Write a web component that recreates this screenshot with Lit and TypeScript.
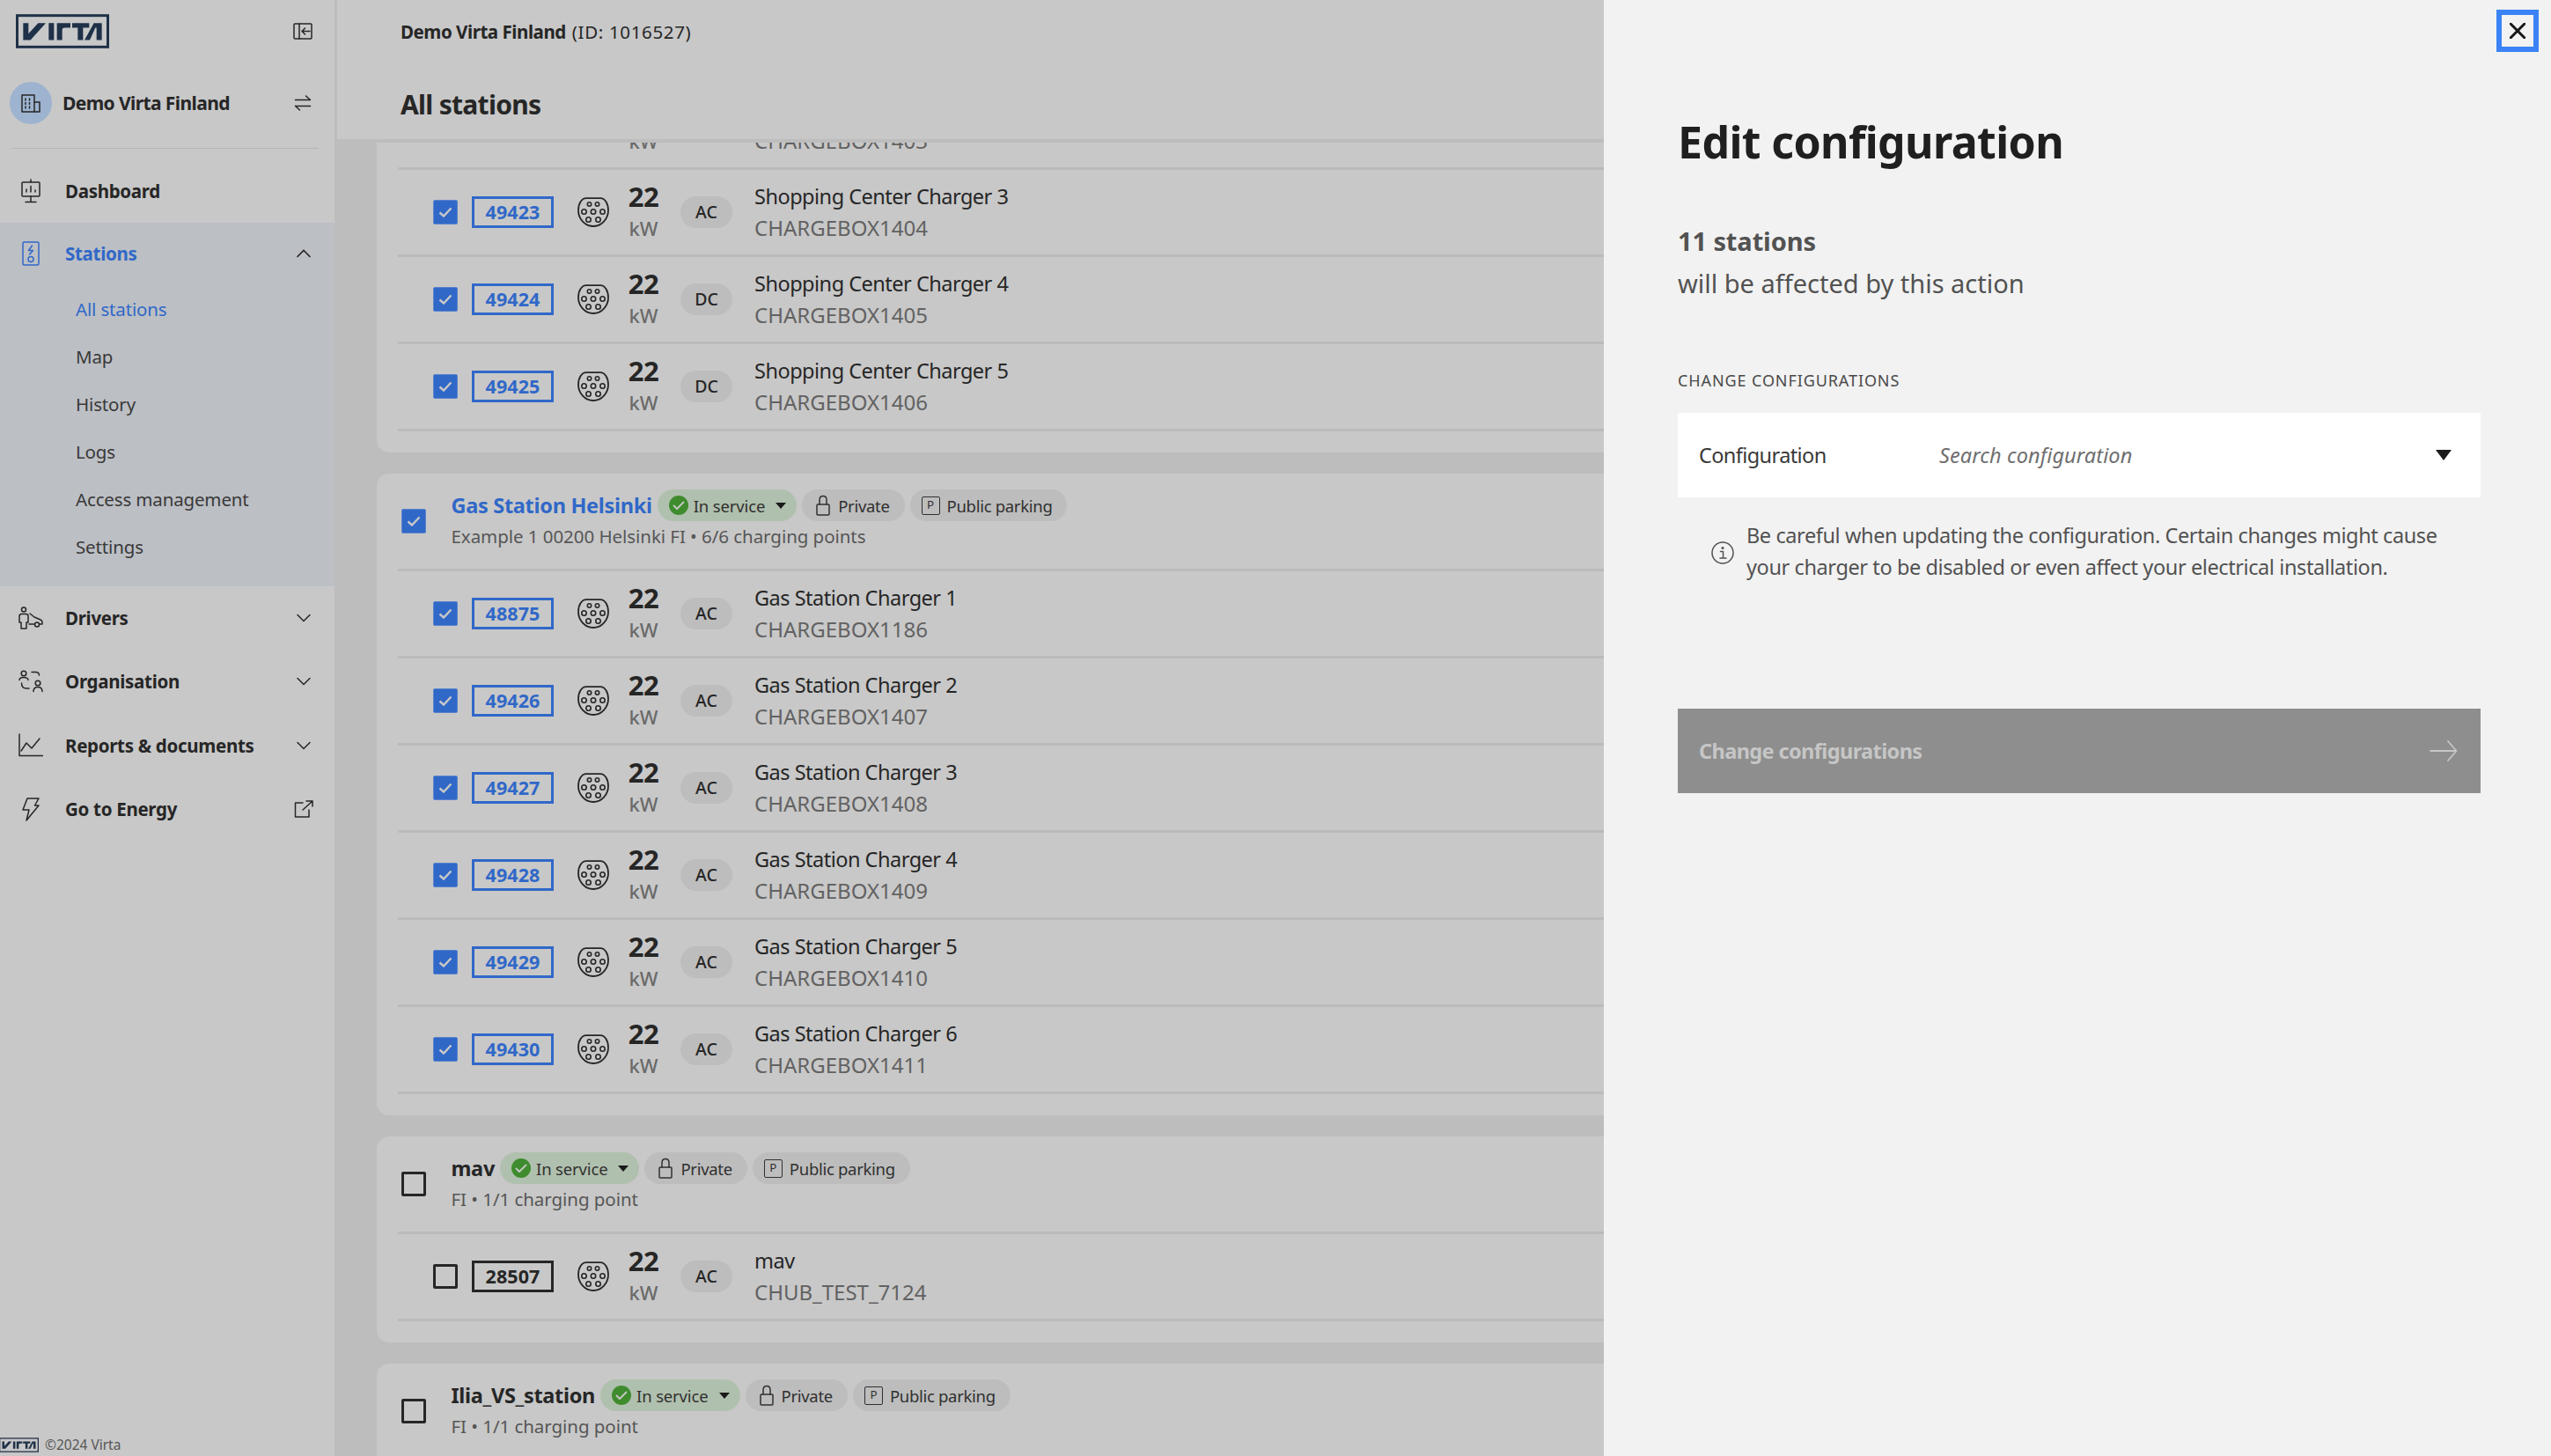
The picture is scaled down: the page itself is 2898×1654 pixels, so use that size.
import { LitElement, html, css, svg } from "lit";
import { customElement } from "lit/decorators.js";

const Logo = (w: number, h: number) => html`<svg class="logo" width=${w} height=${h} viewBox="0 0 318 116">
  <rect x="4.5" y="4.5" width="309" height="107" fill="none" stroke="#1f3148" stroke-width="9"/>
  <g fill="#1f3148">
    <path d="M25 30H43V66L76 30H102L50 88H25Z"/>
    <path d="M112 30H130V88H112Z"/>
    <path d="M140 30H186V46H166Q158 46 158 54V88H140Z"/>
    <path d="M192 30H250V46H229V88H211V46H192Z"/>
    <path d="M234 88L266 30H293V88H275V46H271L252 88Z"/>
  </g></svg>`;

const ic = (w: number, h: number, vb: string, body: unknown, cls = "") =>
  html`<svg class="ic ${cls}" width=${w} height=${h} viewBox=${vb} fill="none" stroke="currentColor" stroke-width="1.5" stroke-linecap="round" stroke-linejoin="round">${body}</svg>`;

const chevD = ic(18, 10, "0 0 18 10", svg`<path d="M2 1.5L9 8.5L16 1.5" stroke-linejoin="miter"/>`);
const chevU = ic(18, 10, "0 0 18 10", svg`<path d="M2 8.5L9 1.5L16 8.5" stroke-width="1.7" stroke-linejoin="miter"/>`);
const collapse = ic(22, 19, "0 0 22 19", svg`<rect x="1" y="1" width="20" height="17" rx="1"/><path d="M7 1V18"/><path d="M19 9.5H10M13.5 6L10 9.5L13.5 13"/>`);
const swap = ic(20, 20, "0 0 20 20", svg`<path d="M1.5 6.5H18.5M13.5 2L18.5 6.5"/><path d="M18.5 13.5H1.5M6.5 18L1.5 13.5"/>`);
const building = ic(22, 21, "0 0 22 21", svg`<rect x="1" y="1" width="14" height="19"/><path d="M15 9H21V20H15"/><path d="M5 5V7M9.5 5V7M5 9.5V11.5M9.5 9.5V11.5M5 14V16M9.5 14V16"/>`);
const dash = ic(22, 28, "0 0 22 28", svg`<rect x="1" y="4" width="20" height="16" rx="1"/><path d="M11 1V4M11 20V26M5 26.5H17M6 15V12M11 15V8.5M16 15V13"/>`);
const stationIc = ic(20, 28, "0 0 20 28", svg`<rect x="1" y="1" width="18" height="26" rx="1.5"/><path d="M11.5 5L7.5 10.5H12.5L8.5 15"/><circle cx="10" cy="20.5" r="3"/>`);
const driver = ic(28, 26, "0 0 28 26", svg`<circle cx="6" cy="3.5" r="2.5"/><path d="M1 18V11Q1 8.5 3.5 8.5H8.5Q11 8.5 11 11V18H9V25H3V18Z"/><path d="M13 8L18 12L25 15Q27 16 27 18V20H24M18 20H12"/><circle cx="21" cy="20.5" r="2.5"/>`);
const org = ic(28, 26, "0 0 28 26", svg`<circle cx="6" cy="4" r="2.8"/><path d="M1 11.5Q1 8.5 6 8.5Q10.5 8.5 11 11.5"/><circle cx="22" cy="15" r="2.8"/><path d="M17 24.5Q17 19.5 22 19.5Q27 19.5 27 24.5"/><path d="M15 2.5H20Q23 2.5 23.5 6"/><path d="M3.5 15Q3.5 21 9 21H12"/>`);
const chart = ic(28, 27, "0 0 28 27", svg`<path d="M1 1V25.5H27.5"/><path d="M3 20L9 11L15 17L24 6"/>`);
const bolt = ic(20, 27, "0 0 20 27", svg`<path d="M6 1H19L14.5 9H19L5 26L8 14H1Z"/>`);
const ext = ic(22, 20, "0 0 22 20", svg`<path d="M10 3H1.5V19H17V11"/><path d="M10 11L21 1M14 1H21V7"/>`, "ext");
const connector = ic(36, 34, "0 0 36 34", svg`<path d="M10 1.2H26C31 1.2 35 7 35 15C35 24 28 33 18 33C8 33 1 24 1 15C1 7 5 1.2 10 1.2Z" stroke-width="1.8"/>
  <g stroke-width="1.6"><circle cx="13.5" cy="8" r="2.2"/><circle cx="22.5" cy="8" r="2.2"/><circle cx="7.5" cy="16.5" r="2.7"/><circle cx="18" cy="16.5" r="2.7"/><circle cx="28.5" cy="16.5" r="2.7"/><circle cx="12.5" cy="25.5" r="2.7"/><circle cx="23.5" cy="25.5" r="2.7"/></g>`);
const lock = ic(18, 24, "0 0 18 24", svg`<rect x="2" y="11" width="14" height="12" rx="1"/><path d="M5 11V6Q5 1.5 9 1.5Q13 1.5 13 6V11"/>`);
const parking = html`<span class="pbox">P</span>`;
const caret = html`<span class="caret"></span>`;
const checkW = ic(16, 12, "0 0 16 12", svg`<path d="M1.5 6.5L6 10.5L14.5 1.5" stroke-width="2.4" stroke-linejoin="miter" stroke-linecap="butt"/>`, "ck");
const okW = ic(14, 11, "0 0 14 11", svg`<path d="M1.5 5.5L5 9L12.5 1.5" stroke-width="1.8"/>`);
const info = ic(26, 26, "0 0 26 26", svg`<circle cx="13" cy="13" r="12"/><path d="M10.5 11.5H13.5V19M10 19H17" /><circle cx="13" cy="7.5" r=".8" fill="currentColor"/>`);
const arrow = ic(32, 24, "0 0 32 24", svg`<path d="M1 12H30M21 1L30.5 12L21 23" stroke-width="1.8"/>`);
const closeX = ic(18, 18, "0 0 18 18", svg`<path d="M1 1L17 17M17 1L1 17" stroke-width="3" stroke-linecap="square"/>`);

type Row = { id: string; type: string; name: string; code: string; on: boolean };
type Card = { title?: string; sub?: string; on?: boolean; rows: Row[] };

const shop = (n: number, id: number, box: number, type: string): Row => ({ id: String(id), type, name: `Shopping Center Charger ${n}`, code: `CHARGEBOX${box}`, on: true });
const gas = (n: number, id: number, box: number): Row => ({ id: String(id), type: "AC", name: `Gas Station Charger ${n}`, code: `CHARGEBOX${box}`, on: true });

const cards: Card[] = [
  { rows: [shop(2, 49422, 1403, "AC"), shop(3, 49423, 1404, "AC"), shop(4, 49424, 1405, "DC"), shop(5, 49425, 1406, "DC")] },
  { title: "Gas Station Helsinki", sub: "Example 1 00200 Helsinki FI • 6/6 charging points", on: true,
    rows: [gas(1, 48875, 1186), gas(2, 49426, 1407), gas(3, 49427, 1408), gas(4, 49428, 1409), gas(5, 49429, 1410), gas(6, 49430, 1411)] },
  { title: "mav", sub: "FI • 1/1 charging point", rows: [{ id: "28507", type: "AC", name: "mav", code: "CHUB_TEST_7124", on: false }] },
  { title: "Ilia_VS_station", sub: "FI • 1/1 charging point", rows: [] },
];

@customElement("app-root")
export class AppRoot extends LitElement {
  static styles = css`
    :host { display: block; font-family: "Noto Sans", "Liberation Sans", sans-serif; color: #262626; }
    * { box-sizing: border-box; }
    svg { display: block; flex: none; }
    .app { position: relative; display: grid; grid-template-columns: 380px 1fr; height: 1654px; width: 2898px; overflow: hidden; background: #bdbdbd; }

    .side { display: flex; flex-direction: column; background: #c8c8c8; height: 1654px; }
    .brand { height: 72px; display: flex; align-items: center; justify-content: space-between; padding: 0 25px 1px 18px; }
    .org { height: 90px; display: flex; align-items: center; padding: 0 26px 0 11px; font-size: 21px; font-weight: 700; gap: 12px; }
    .avatar { width: 48px; height: 48px; border-radius: 50%; background: #9db3cf; display: flex; align-items: center; justify-content: center; flex: none; }
    .org .grow { flex: 1; letter-spacing: -.6px; }
    .sep { height: 1px; background: #b4b4b4; margin: 6px 18px 12px 14px; }
    .nav { height: 72.4px; display: flex; align-items: center; font-size: 20.5px; font-weight: 700; padding: 0 26px 1px 0; }
    .nav .slot { width: 74px; display: flex; justify-content: center; padding-right: 4px; flex: none; }
    .nav .lab { flex: 1; letter-spacing: -.3px; }
    .nav .ext { margin-right: -2px; }
    .group { background: #bcbfc4; padding-bottom: 18px; }
    .group .nav { height: 71px; color: #3068c8; }
    .group .chev { color: #262626; }
    .sub { height: 54px; display: flex; align-items: center; padding-left: 86px; font-size: 20.5px; color: #393939; letter-spacing: -.15px; }
    .sub.cur { color: #3068c8; }
    .foot { margin-top: auto; display: flex; align-items: center; gap: 7px; height: 18px; margin-bottom: 4px; font-size: 15.5px; color: #565656; }
    .foot .logo { margin-left: -1px; }

    .main { display: flex; flex-direction: column; border-left: 3px solid #bdbdbd; min-width: 0; }
    .top { height: 158px; background: #c8c8c8; flex: none; padding: 0 0 0 72px; margin-bottom: 4px; }
    .crumb { height: 72px; display: flex; align-items: center; font-size: 20.5px; gap: 7px; letter-spacing: -.15px; }
    .crumb b { font-weight: 700; letter-spacing: -.45px; }
    .crumb span { letter-spacing: .65px; }
    .top h2 { margin: 0; font-size: 30px; font-weight: 700; line-height: 94px; letter-spacing: -.7px; }
    .list { flex: 1; overflow: hidden; padding: 0 40px 0 45px; }
    .card { background: #c8c8c8; border-radius: 14px; padding: 0 24px 24px; margin-bottom: 24px; }
    .card.first { margin-top: -68px; }
    .head { height: 111px; border-bottom: 3px solid #bbbbbb; display: flex; align-items: center; padding-left: 3.5px; gap: 29px; }
    .head > div { margin-bottom: 3px; }
    .titleline { display: flex; align-items: center; gap: 6px; height: 36px; margin-bottom: 1px; }
    .t { font-size: 23.5px; font-weight: 700; letter-spacing: -.3px; }
    .t.on { color: #3068c8; }
    .subline { font-size: 20.5px; color: #565656; line-height: 32px; letter-spacing: -.05px; }
    .pill { height: 36px; border-radius: 18px; background: #bdbdbd; display: flex; align-items: center; font-size: 18.5px; padding: 0 17px 0 15px; gap: 8px; color: #303030; letter-spacing: -.3px; white-space: nowrap; }
    .pill.ok { background: #b0c0ae; padding: 0 12px 0 13px; gap: 6px; letter-spacing: -.15px; }
    .pill.pub { padding: 0 17px 0 13px; }
    .dot { width: 22px; height: 22px; border-radius: 50%; background: #3f8c2e; color: #c8c8c8; display: flex; align-items: center; justify-content: center; }
    .caret { width: 0; height: 0; border-left: 6px solid transparent; border-right: 6px solid transparent; border-top: 7.5px solid #1a1a1a; margin-left: 6px; }
    .pbox { width: 21px; height: 21px; border: 1.5px solid #303030; border-radius: 2px; font-size: 13px; display: flex; align-items: center; justify-content: center; font-family: "Liberation Mono", monospace; }

    .check { width: 28px; height: 28px; border-radius: 2px; background: transparent; border: 3px solid #262626; flex: none; display: flex; align-items: center; justify-content: center; color: #c8c8c8; }
    .check.on { background: #3068c8; border: 1px solid #5a84cc; }

    .row { height: 99px; border-bottom: 3px solid #bbbbbb; display: flex; align-items: center; padding-left: 39.5px; }
    .id { margin-left: 16.5px; width: 93px; height: 36px; border: 3px solid #262626; display: flex; align-items: center; justify-content: center; font-weight: 700; font-size: 21.5px; letter-spacing: .1px; padding-bottom: 2px; }
    .id.on { border-color: #3068c8; color: #3068c8; }
    .conn { margin-left: 27px; color: #262626; }
    .power { margin-left: 21px; width: 36px; display: flex; flex-direction: column; align-items: center; }
    .power b { font-size: 31px; line-height: 36px; font-weight: 700; letter-spacing: -.6px; }
    .power span { font-size: 22px; line-height: 36px; color: #6a6a6a; font-weight: 500; }
    .type { margin-left: 24px; height: 36px; min-width: 59px; padding: 0 14px 1px; border-radius: 18px; background: #bdbdbd; display: flex; align-items: center; justify-content: center; font-size: 19.5px; font-weight: 500; color: #262626; }
    .names { margin-left: 25px; font-size: 24px; line-height: 36px; }
    .names .n { font-size: 23.5px; letter-spacing: -.5px; }
    .names .c { color: #626262; }

    .panel { position: absolute; top: 0; right: 0; bottom: 0; width: 1076px; background: #f2f2f2; padding: 129px 80px 0 84px; }
    .x { position: absolute; top: 11px; right: 14px; width: 48px; height: 48px; border: 6px solid #3b82f6; display: flex; align-items: center; justify-content: center; color: #161616; }
    h1 { margin: 0 0 57px; font-size: 50px; line-height: 64px; font-weight: 700; letter-spacing: -.6px; color: #1f1f1f; }
    .aff { font-size: 29px; line-height: 48px; color: #525252; margin-bottom: 74px; }
    .aff b { display: block; font-weight: 700; letter-spacing: -.1px; }
    .lbl { font-size: 18px; line-height: 24px; letter-spacing: .9px; color: #4a4a4a; margin-bottom: 25px; }
    .field { height: 96px; background: #fff; display: flex; align-items: center; padding: 0 33px 0 24px; font-size: 23.5px; color: #393939; letter-spacing: -.6px; }
    .field .f { width: 273px; }
    .field i { flex: 1; color: #6f6f6f; letter-spacing: .1px; }
    .field .caret { border-left-width: 9.5px; border-right-width: 9.5px; border-top-width: 12px; }
    .note { display: flex; align-items: center; margin: 25px 0 0 38px; gap: 14px; font-size: 23.5px; line-height: 36px; color: #525252; letter-spacing: -.4px; }
    .note svg { margin-top: 4px; }
    .btn { margin-top: 143px; height: 96px; background: #8e8e8e; color: #c6c6c6; display: flex; align-items: center; justify-content: space-between; padding: 0 26px 0 24px; font-size: 23.5px; font-weight: 700; letter-spacing: -.6px; }
  `;

  private check(on: boolean) {
    return html`<span class="check ${on ? "on" : ""}">${on ? checkW : ""}</span>`;
  }

  private renderRow(r: Row) {
    return html`<div class="row">
      ${this.check(r.on)}
      <span class="id ${r.on ? "on" : ""}">${r.id}</span>
      <span class="conn">${connector}</span>
      <span class="power"><b>22</b><span>kW</span></span>
      <span class="type">${r.type}</span>
      <div class="names"><div class="n">${r.name}</div><div class="c">${r.code}</div></div>
    </div>`;
  }

  private renderCard(c: Card, i: number) {
    return html`<section class="card ${i === 0 ? "first" : ""}">
      ${c.title ? html`<div class="head">
        ${this.check(!!c.on)}
        <div>
          <div class="titleline">
            <span class="t ${c.on ? "on" : ""}">${c.title}</span>
            <span class="pill ok"><span class="dot">${okW}</span><span>In service</span>${caret}</span>
            <span class="pill">${lock}<span>Private</span></span>
            <span class="pill pub">${parking}<span>Public parking</span></span>
          </div>
          <div class="subline">${c.sub}</div>
        </div>
      </div>` : ""}
      ${c.rows.map((r) => this.renderRow(r))}
    </section>`;
  }

  render() {
    return html`<div class="app">
      <aside class="side">
        <div class="brand">${Logo(106, 39)}${collapse}</div>
        <div class="org"><span class="avatar">${building}</span><span class="grow">Demo Virta Finland</span>${swap}</div>
        <div class="sep"></div>
        <div class="nav"><span class="slot">${dash}</span><span class="lab">Dashboard</span></div>
        <div class="group">
          <div class="nav"><span class="slot">${stationIc}</span><span class="lab">Stations</span><span class="chev">${chevU}</span></div>
          <div class="sub cur">All stations</div>
          <div class="sub">Map</div>
          <div class="sub">History</div>
          <div class="sub">Logs</div>
          <div class="sub">Access management</div>
          <div class="sub">Settings</div>
        </div>
        <div class="nav"><span class="slot">${driver}</span><span class="lab">Drivers</span>${chevD}</div>
        <div class="nav"><span class="slot">${org}</span><span class="lab">Organisation</span>${chevD}</div>
        <div class="nav"><span class="slot">${chart}</span><span class="lab">Reports &amp; documents</span>${chevD}</div>
        <div class="nav"><span class="slot">${bolt}</span><span class="lab">Go to Energy</span>${ext}</div>
        <div class="foot">${Logo(45, 17)}<span>©2024 Virta</span></div>
      </aside>
      <main class="main">
        <header class="top">
          <div class="crumb"><b>Demo Virta Finland</b><span>(ID: 1016527)</span></div>
          <h2>All stations</h2>
        </header>
        <div class="list">${cards.map((c, i) => this.renderCard(c, i))}</div>
      </main>
      <div class="panel">
        <div class="x">${closeX}</div>
        <h1>Edit configuration</h1>
        <div class="aff"><b>11 stations</b>will be affected by this action</div>
        <div class="lbl">CHANGE CONFIGURATIONS</div>
        <div class="field"><span class="f">Configuration</span><i>Search configuration</i>${caret}</div>
        <div class="note">${info}<div>Be careful when updating the configuration. Certain changes might cause<br />your charger to be disabled or even affect your electrical installation.</div></div>
        <div class="btn"><span>Change configurations</span>${arrow}</div>
      </div>
    </div>`;
  }
}
